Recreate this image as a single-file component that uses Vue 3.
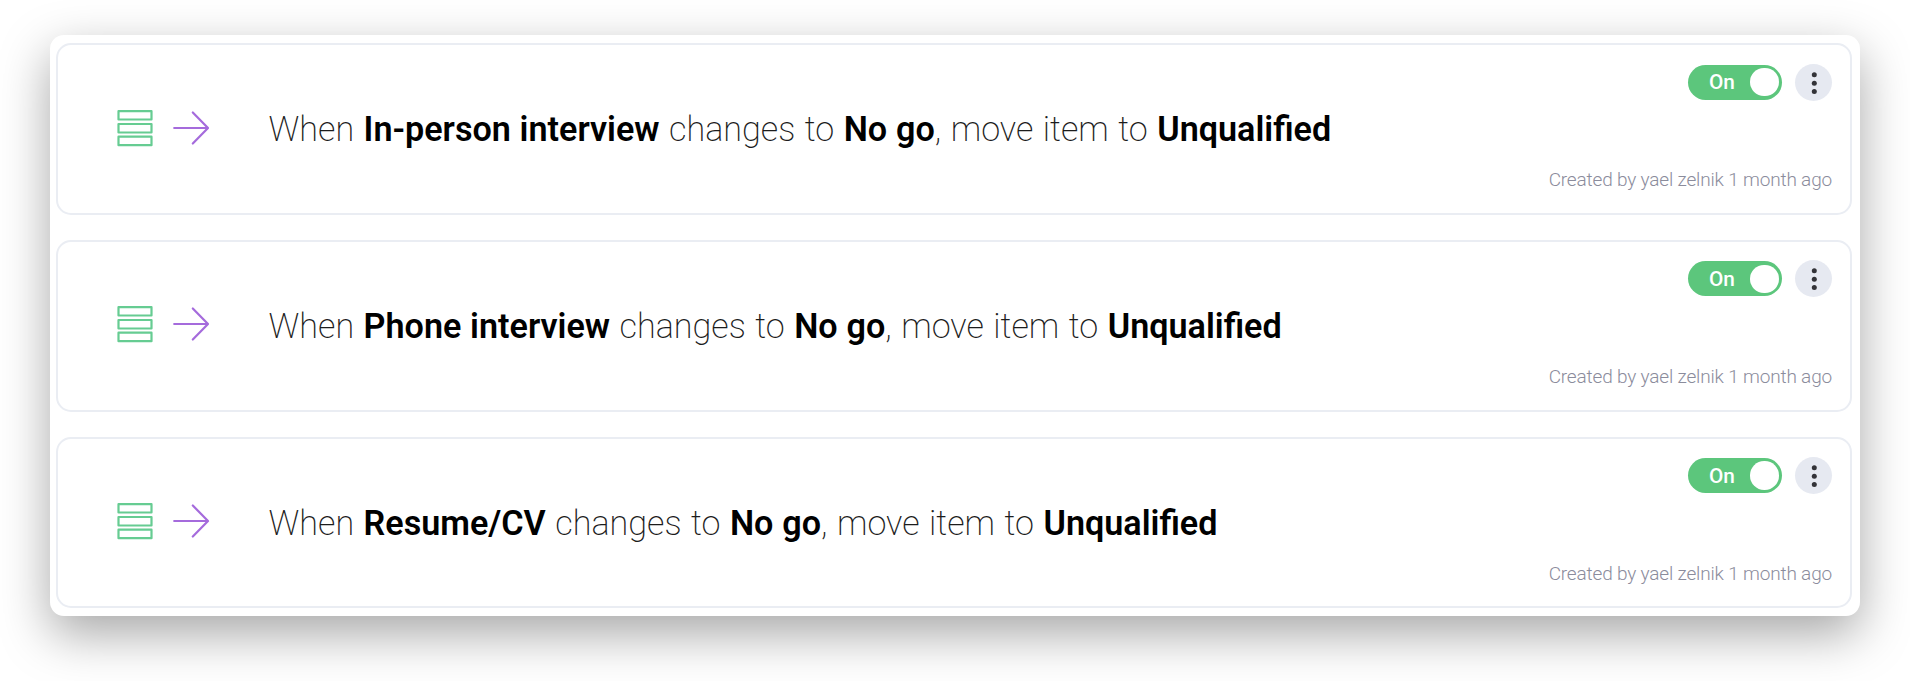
<script setup>
const rules = [
  { column: 'In-person interview', status: 'No go', group: 'Unqualified' },
  { column: 'Phone interview', status: 'No go', group: 'Unqualified' },
  { column: 'Resume/CV', status: 'No go', group: 'Unqualified' }
]
</script>

<template>
  <main class="stage">
    <section class="panel">
      <article v-for="rule in rules" :key="rule.column" class="card">
        <svg class="icons" width="96" height="40" viewBox="0 0 96 40" fill="none">
          <g stroke="#66cc92" stroke-width="2.2" stroke-linejoin="round">
            <rect x="2.5" y="3.2" width="33" height="8.3" />
            <rect x="2.5" y="16" width="33" height="8.5" />
            <rect x="2.5" y="28.7" width="33" height="8.5" />
          </g>
          <path d="M58.2 20H91.5M76.8 4.5L92 20L76.8 35.5" stroke="#a56bdc" stroke-width="2.2" stroke-linecap="round" stroke-linejoin="round" />
        </svg>
        <p class="sentence">When <b>{{ rule.column }}</b> changes to <b>{{ rule.status }}</b>, move item to <b>{{ rule.group }}</b></p>
        <div class="side">
          <div class="controls">
            <div class="toggle"><span>On</span><i class="knob"></i></div>
            <div class="menu">
              <svg width="37" height="37" viewBox="0 0 37 37" fill="#333338">
                <circle cx="19.3" cy="10.8" r="2.5" />
                <circle cx="19.3" cy="19.2" r="2.5" />
                <circle cx="19.3" cy="27.6" r="2.5" />
              </svg>
            </div>
          </div>
          <div class="meta">Created by yael zelnik 1 month ago</div>
        </div>
      </article>
    </section>
  </main>
</template>

<style>
body { margin: 0; background: #fff; }
</style>

<style scoped>
.stage {
  box-sizing: border-box;
  height: 681px;
  padding: 35px 50px 65px;
  overflow: hidden;
  background: #fff;
  font-family: Roboto, "Liberation Sans", sans-serif;
}
.panel {
  box-sizing: border-box;
  height: 581px;
  padding: 8px 8px 0 6px;
  display: flex;
  flex-direction: column;
  gap: 25px;
  border-radius: 14px;
  background: #fff;
  box-shadow: 0 18px 50px rgba(0, 0, 0, 0.35);
}
.card {
  box-sizing: border-box;
  height: 171.8px;
  display: flex;
  border: 2px solid #eaedf3;
  border-radius: 15px;
}
.icons { flex: none; margin: 62.5px 0 0 57.5px; }
.sentence {
  margin: 59px 0 0 57px;
  flex: 1;
  font-size: 34.15px;
  line-height: 50px;
  font-weight: 200;
  word-spacing: 1.25px;
  color: #1c1c1c;
  white-space: nowrap;
}
.sentence b { font-weight: 600; word-spacing: 0.3px; color: #000; }
.side {
  display: flex;
  flex-direction: column;
  justify-content: space-between;
  align-items: flex-end;
  padding: 18.5px 18px 20.5px 0;
}
.controls { display: flex; align-items: center; gap: 13.5px; }
.toggle {
  box-sizing: border-box;
  width: 94px;
  height: 35px;
  padding: 0 3px 0 21.5px;
  display: flex;
  align-items: center;
  justify-content: space-between;
  border-radius: 18px;
  background: #5cc67c;
  color: #fff;
  font-size: 20.8px;
  font-weight: 500;
}
.knob { width: 28.5px; height: 28.5px; border-radius: 50%; background: #fff; }
.menu { width: 37px; height: 37px; border-radius: 50%; background: #e6e9f1; }
.menu svg { display: block; }
.meta { font-size: 19px; line-height: 24px; font-weight: 300; letter-spacing: -0.17px; color: #8b8c9c; white-space: nowrap; }
</style>
